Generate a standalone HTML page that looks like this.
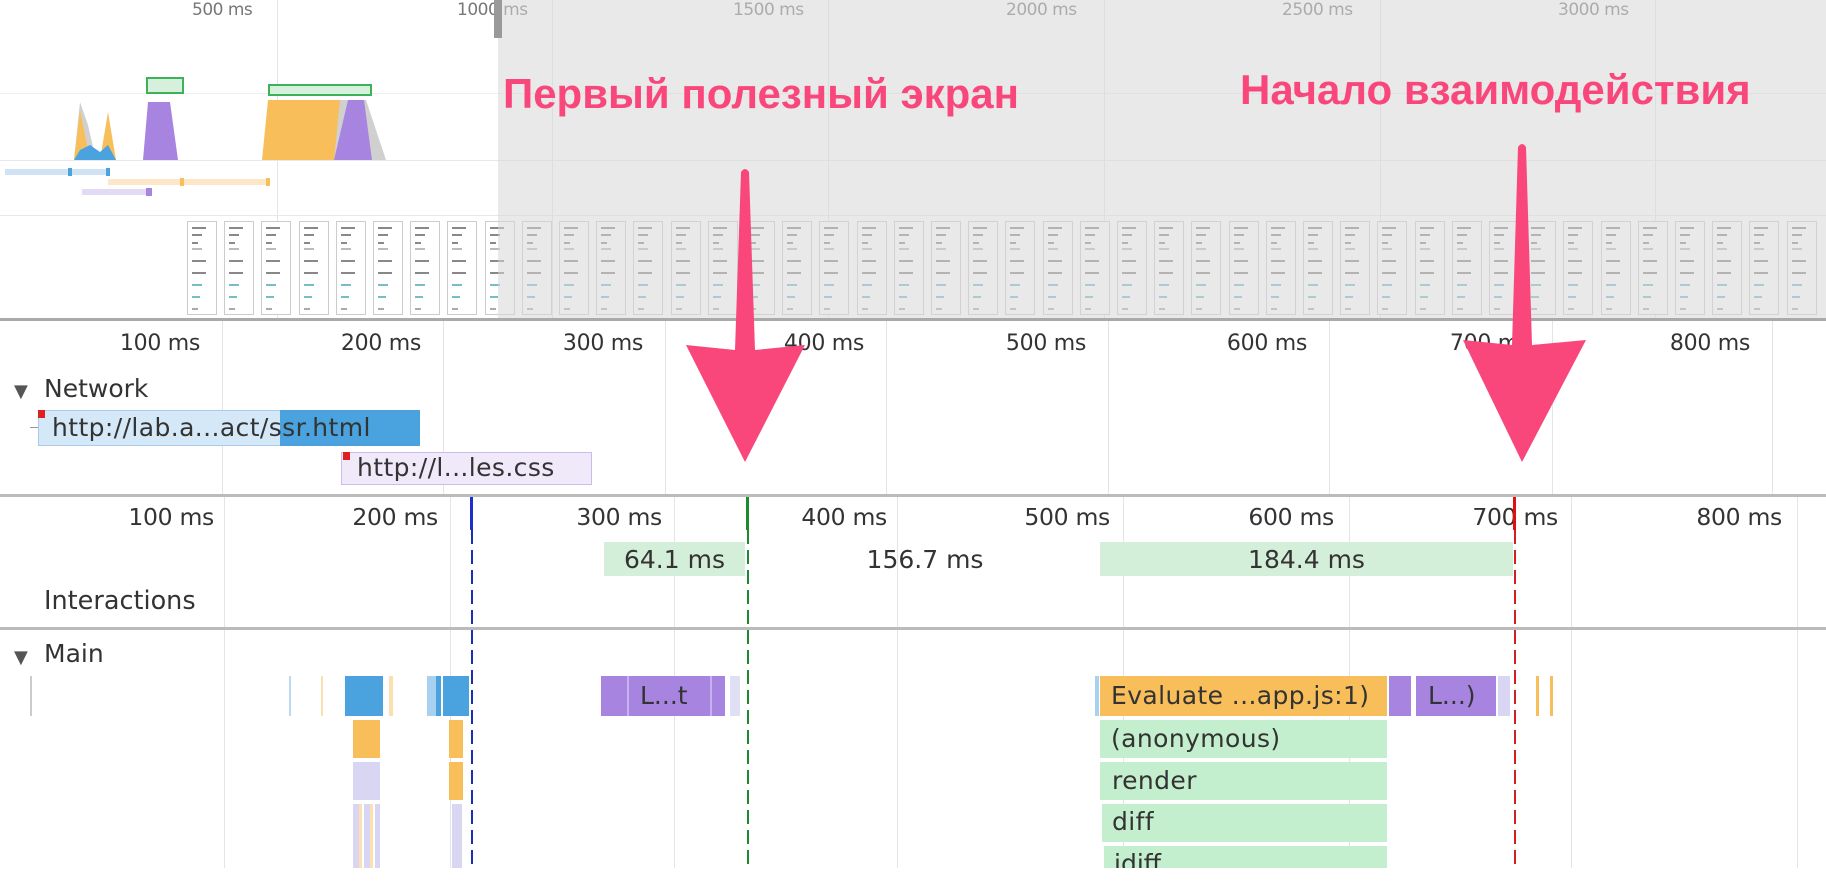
<!DOCTYPE html>
<html><head><meta charset="utf-8"><style>
*{margin:0;padding:0;box-sizing:border-box}
body{width:1826px;height:888px;background:#fff;position:relative;overflow:hidden;font-family:"DejaVu Sans","Liberation Sans",sans-serif;color:#333}
.a{position:absolute}
.tl{position:absolute;top:0;font-size:17px;color:#777;letter-spacing:-0.5px}
.vg{position:absolute;width:1px;background:#e4e4e4}
.rl{position:absolute;font-size:22px;color:#333;text-align:right;width:140px;letter-spacing:-0.3px}
.r2{font-size:23.5px}
.fr{position:absolute;top:221px;width:30px;height:94px;border:1px solid #ccc;background:#fff}
.fr i{position:absolute;left:4px;height:2px;background:#888}
.pk{position:absolute;font-family:"Liberation Sans",sans-serif;font-weight:bold;font-size:42px;color:#f9477c;white-space:nowrap}
.bar{position:absolute;font-size:25px;line-height:36px;padding-left:12px;color:#333;white-space:nowrap;overflow:hidden;letter-spacing:0.4px}
</style></head><body>

<div class="vg" style="left:277px;top:0;height:320px"></div>
<div class="vg" style="left:552px;top:0;height:320px"></div>
<div class="vg" style="left:828px;top:0;height:320px"></div>
<div class="vg" style="left:1104px;top:0;height:320px"></div>
<div class="vg" style="left:1380px;top:0;height:320px"></div>
<div class="vg" style="left:1655px;top:0;height:320px"></div>
<div class="tl" style="left:192px">500 ms</div>
<div class="tl" style="left:457px">1000 ms</div>
<div class="tl" style="left:733px">1500 ms</div>
<div class="tl" style="left:1006px">2000 ms</div>
<div class="tl" style="left:1282px">2500 ms</div>
<div class="tl" style="left:1558px">3000 ms</div>
<div class="a" style="left:0;top:93px;width:1826px;height:1px;background:#eee"></div>
<div class="a" style="left:0;top:160px;width:1826px;height:1px;background:#e8e8e8"></div>
<div class="a" style="left:0;top:215px;width:1826px;height:1px;background:#e8e8e8"></div>

<svg class="a" style="left:0;top:70px" width="420" height="130">
<rect x="147" y="8" width="36" height="15" fill="#d6f0dc" stroke="#3cb25a" stroke-width="2"/>
<rect x="269" y="15" width="102" height="10" fill="#d6f0dc" stroke="#3cb25a" stroke-width="2"/>
<path d="M74,90 L80,32 L88,55 L96,90 Z" fill="#d0d0d0"/>
<path d="M74,90 L80,40 L88,80 L95,90 Z" fill="#f8be5a"/>
<path d="M100,90 L108,42 L116,90 Z" fill="#f8be5a"/>
<path d="M74,90 L80,80 L90,75 L100,82 L108,75 L116,90 Z" fill="#4aa3df"/>
<path d="M143,90 L148,32 L170,32 L178,90 Z" fill="#a784e0"/>
<path d="M262,90 L268,30 L346,30 L357,90 Z" fill="#f8be5a"/>
<path d="M334,90 L340,30 L366,30 L386,90 Z" fill="#d0d0d0"/>
<path d="M334,90 L348,30 L364,30 L372,90 Z" fill="#a784e0"/>
<rect x="5" y="99" width="105" height="6" fill="#cfe3f5"/><rect x="68" y="98" width="4" height="8" fill="#4aa3df"/><rect x="106" y="98" width="4" height="8" fill="#4aa3df"/>
<rect x="108" y="109" width="162" height="6" fill="#fde7c8"/><rect x="180" y="108" width="4" height="8" fill="#f8be5a"/><rect x="266" y="108" width="4" height="8" fill="#f8be5a"/>
<rect x="82" y="119" width="68" height="6" fill="#e3daf5"/><rect x="146" y="118" width="6" height="8" fill="#a784e0"/>
</svg>

<div id="fs"></div>
<script>
var h='';for(var i=0;i<44;i++){var x=187+i*37.2;h+='<div class="fr" style="left:'+x+'px"><i style="top:5px;width:14px"></i><i style="top:12px;width:10px"></i><i style="top:20px;width:6px"></i><i style="top:26px;width:10px;background:#bbb"></i><i style="top:38px;width:14px"></i><i style="top:50px;width:14px"></i><i style="top:62px;width:10px;background:#7bc"></i><i style="top:74px;width:8px;background:#7bc"></i><i style="top:86px;width:6px;background:#aaa"></i></div>';}
document.getElementById('fs').innerHTML=h;
</script>

<div class="a" style="left:498px;top:0;width:1328px;height:320px;background:rgba(215,215,215,0.55)"></div>
<div class="a" style="left:494px;top:0;width:8px;height:38px;background:#999"></div>
<div class="a" style="left:0;top:318px;width:1826px;height:3px;background:#aaa"></div>

<div class="vg" style="left:222px;top:321px;height:174px"></div>
<div class="vg" style="left:443px;top:321px;height:174px"></div>
<div class="vg" style="left:665px;top:321px;height:174px"></div>
<div class="vg" style="left:886px;top:321px;height:174px"></div>
<div class="vg" style="left:1108px;top:321px;height:174px"></div>
<div class="vg" style="left:1329px;top:321px;height:174px"></div>
<div class="vg" style="left:1552px;top:321px;height:174px"></div>
<div class="vg" style="left:1772px;top:321px;height:174px"></div>
<div class="rl" style="left:60px;top:331px">100 ms</div>
<div class="rl" style="left:281px;top:331px">200 ms</div>
<div class="rl" style="left:503px;top:331px">300 ms</div>
<div class="rl" style="left:724px;top:331px">400 ms</div>
<div class="rl" style="left:946px;top:331px">500 ms</div>
<div class="rl" style="left:1167px;top:331px">600 ms</div>
<div class="rl" style="left:1390px;top:331px">700 ms</div>
<div class="rl" style="left:1610px;top:331px">800 ms</div>

<div class="a" style="left:14px;top:381px;font-size:18px;color:#555">▼</div>
<div class="a" style="left:44px;top:374px;font-size:25px">Network</div>
<div class="a" style="left:30px;top:427px;width:10px;height:1px;background:#999"></div>
<div class="a" style="left:38px;top:410px;width:382px;height:36px;background:#d5e8f8;border:1px solid #a9cbeb"></div>
<div class="a" style="left:280px;top:410px;width:140px;height:36px;background:#4aa3df"></div>
<div class="a" style="left:38px;top:410px;width:7px;height:8px;background:#e02020"></div>
<div class="bar" style="left:40px;top:410px;">http://lab.a...act/ssr.html</div>
<div class="a" style="left:341px;top:452px;width:251px;height:33px;background:#efe9fa;border:1px solid #cbbde9"></div>
<div class="a" style="left:343px;top:452px;width:7px;height:8px;background:#e02020"></div>
<div class="bar" style="left:345px;top:450px;">http://l...les.css</div>

<div class="a" style="left:0;top:494px;width:1826px;height:3px;background:#bbb"></div>

<div class="vg" style="left:224px;top:497px;height:391px"></div>
<div class="vg" style="left:450px;top:497px;height:391px"></div>
<div class="vg" style="left:674px;top:497px;height:391px"></div>
<div class="vg" style="left:897px;top:497px;height:391px"></div>
<div class="vg" style="left:1123px;top:497px;height:391px"></div>
<div class="vg" style="left:1349px;top:497px;height:391px"></div>
<div class="vg" style="left:1571px;top:497px;height:391px"></div>
<div class="vg" style="left:1797px;top:497px;height:391px"></div>
<div class="rl r2" style="left:74px;top:503px">100 ms</div>
<div class="rl r2" style="left:298px;top:503px">200 ms</div>
<div class="rl r2" style="left:522px;top:503px">300 ms</div>
<div class="rl r2" style="left:747px;top:503px">400 ms</div>
<div class="rl r2" style="left:970px;top:503px">500 ms</div>
<div class="rl r2" style="left:1194px;top:503px">600 ms</div>
<div class="rl r2" style="left:1418px;top:503px">700 ms</div>
<div class="rl r2" style="left:1642px;top:503px">800 ms</div>

<div class="a" style="left:604px;top:542px;width:141px;height:34px;background:#d4efd9"></div>
<div class="a" style="left:604px;top:545px;width:141px;text-align:center;font-size:25px">64.1 ms</div>
<div class="a" style="left:850px;top:545px;width:150px;text-align:center;font-size:25px">156.7 ms</div>
<div class="a" style="left:1100px;top:542px;width:413px;height:34px;background:#d4efd9"></div>
<div class="a" style="left:1100px;top:545px;width:413px;text-align:center;font-size:25px">184.4 ms</div>
<div class="a" style="left:44px;top:586px;font-size:25.5px">Interactions</div>

<div class="a" style="left:0;top:627px;width:1826px;height:3px;background:#bbb"></div>
<div class="a" style="left:14px;top:647px;font-size:18px;color:#555">▼</div>
<div class="a" style="left:44px;top:639px;font-size:25px">Main</div>

<div class="a" style="left:30px;top:676px;width:2px;height:40px;background:#ccc"></div>
<div class="a" style="left:289px;top:676px;width:2px;height:40px;background:#bcdaf3"></div>
<div class="a" style="left:321px;top:676px;width:2px;height:40px;background:#fde0b0"></div>
<div class="a" style="left:345px;top:676px;width:38px;height:40px;background:#4aa3df"></div>
<div class="a" style="left:389px;top:676px;width:4px;height:40px;background:#fde0b0"></div>
<div class="a" style="left:427px;top:676px;width:42px;height:40px;background:#4aa3df"></div>
<div class="a" style="left:427px;top:676px;width:9px;height:40px;background:#a8d0f0"></div>
<div class="a" style="left:441px;top:676px;width:2px;height:40px;background:#fff"></div>
<div class="a" style="left:353px;top:720px;width:27px;height:38px;background:#f8be5a"></div>
<div class="a" style="left:449px;top:720px;width:14px;height:38px;background:#f8be5a"></div>
<div class="a" style="left:353px;top:762px;width:27px;height:38px;background:#d8d6f2"></div>
<div class="a" style="left:449px;top:762px;width:14px;height:38px;background:#f8be5a"></div>
<div class="a" style="left:353px;top:804px;width:27px;height:64px;background:repeating-linear-gradient(90deg,#d8d6f2 0 6px,#fde0b0 6px 9px,#fff 9px 11px)"></div>
<div class="a" style="left:452px;top:804px;width:10px;height:64px;background:#d8d6f2"></div>

<div class="a" style="left:601px;top:676px;width:124px;height:40px;background:#a784e0"></div>
<div class="a" style="left:627px;top:676px;width:2px;height:40px;background:#c7b2ee"></div>
<div class="a" style="left:710px;top:676px;width:2px;height:40px;background:#c7b2ee"></div>
<div class="a" style="left:730px;top:676px;width:10px;height:40px;background:#e0e0f5"></div>
<div class="a" style="left:640px;top:681px;font-size:25px;color:#333">L...t</div>

<div class="a" style="left:1095px;top:676px;width:4px;height:40px;background:#a8d0f0"></div>
<div class="a" style="left:1100px;top:676px;width:287px;height:40px;background:#f8be5a"></div>
<div class="bar" style="left:1100px;top:678px;padding-left:11px;width:287px">Evaluate ...app.js:1)</div>
<div class="a" style="left:1389px;top:676px;width:22px;height:40px;background:#a784e0"></div>
<div class="a" style="left:1416px;top:676px;width:80px;height:40px;background:#a784e0"></div>
<div class="a" style="left:1428px;top:681px;font-size:25px">L...)</div>
<div class="a" style="left:1498px;top:676px;width:12px;height:40px;background:#d8d6f2"></div>
<div class="a" style="left:1536px;top:676px;width:3px;height:40px;background:#f8be5a"></div>
<div class="a" style="left:1550px;top:676px;width:3px;height:40px;background:#f8be5a"></div>

<div class="a" style="left:1100px;top:720px;width:287px;height:38px;background:#c4efce"></div>
<div class="bar" style="left:1100px;top:721px;padding-left:11px">(anonymous)</div>
<div class="a" style="left:1100px;top:762px;width:287px;height:38px;background:#c4efce"></div>
<div class="bar" style="left:1101px;top:763px;padding-left:11px">render</div>
<div class="a" style="left:1102px;top:804px;width:285px;height:38px;background:#c4efce"></div>
<div class="bar" style="left:1102px;top:804px;padding-left:10px">diff</div>
<div class="a" style="left:1104px;top:846px;width:283px;height:22px;background:#c4efce;overflow:hidden"><div style="padding-left:10px;font-size:25px;line-height:36px">idiff</div></div>

<div class="a" style="left:470px;top:497px;width:3px;height:33px;background:#1a2fd0"></div>
<div class="a" style="left:471px;top:530px;width:2px;height:338px;background:repeating-linear-gradient(#1a2fb0 0 14px,transparent 14px 20px)"></div>
<div class="a" style="left:746px;top:497px;width:3px;height:33px;background:#1e8a2e"></div>
<div class="a" style="left:747px;top:530px;width:2px;height:338px;background:repeating-linear-gradient(#1e8a2e 0 14px,transparent 14px 20px)"></div>
<div class="a" style="left:1513px;top:497px;width:3px;height:33px;background:#e01010"></div>
<div class="a" style="left:1514px;top:530px;width:2px;height:338px;background:repeating-linear-gradient(#d02020 0 14px,transparent 14px 20px)"></div>

<div class="a" style="left:0;top:868px;width:1826px;height:20px;background:#fff"></div>

<div class="pk" style="left:503px;top:70px">Первый полезный экран</div>
<div class="pk" style="left:1240px;top:66px">Начало взаимодействия</div>
<svg class="a" style="left:0;top:0" width="1826" height="888">
<path d="M741,172 Q745,166 749,172 L755,350 L805,345 L745,462 L686,345 L735,350 Z" fill="#f9477c"/>
<path d="M1518,147 Q1522,141 1526,147 L1532,345 L1586,340 L1522,462 L1463,340 L1512,345 Z" fill="#f9477c"/>
</svg>
</body></html>
